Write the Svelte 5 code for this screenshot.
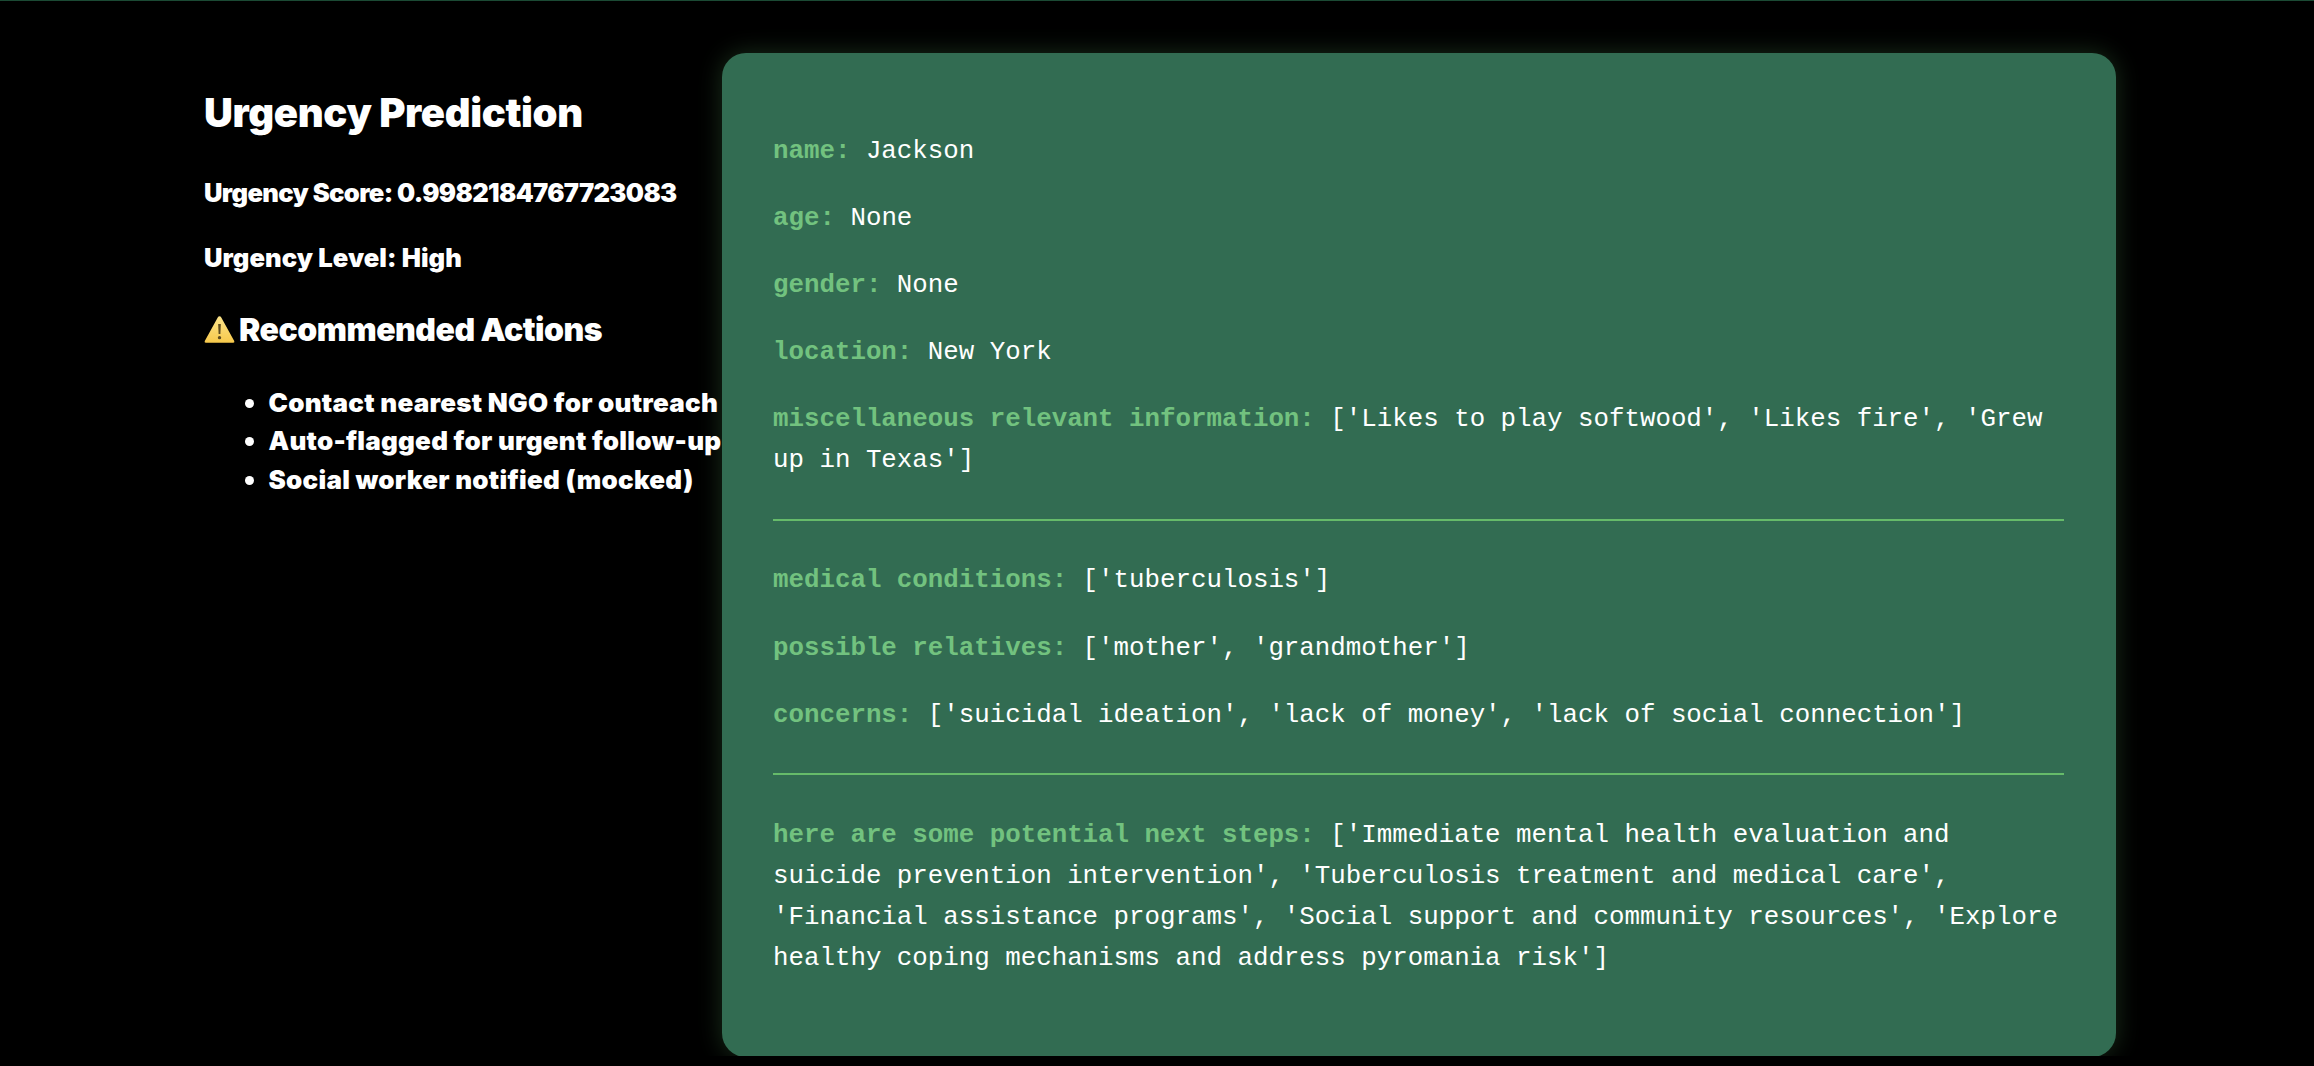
<script>
  const group1 = [
    ['name:', 'Jackson'],
    ['age:', 'None'],
    ['gender:', 'None'],
    ['location:', 'New York'],
    ['miscellaneous relevant information:', "['Likes to play softwood', 'Likes fire', 'Grew up in Texas']"]
  ];
  const group2 = [
    ['medical conditions:', "['tuberculosis']"],
    ['possible relatives:', "['mother', 'grandmother']"],
    ['concerns:', "['suicidal ideation', 'lack of money', 'lack of social connection']"]
  ];
  const group3 = [
    ['here are some potential next steps:', "['Immediate mental health evaluation and suicide prevention intervention', 'Tuberculosis treatment and medical care', 'Financial assistance programs', 'Social support and community resources', 'Explore healthy coping mechanisms and address pyromania risk']"]
  ];
  const groups = [group1, group2, group3];
  const actions = ['Contact nearest NGO for outreach', 'Auto-flagged for urgent follow-up', 'Social worker notified (mocked)'];
</script>

<div class="page">
  <section class="side">
    <h2>Urgency Prediction</h2>
    <p class="score">Urgency Score: 0.9982184767723083</p>
    <p class="level">Urgency Level: High</p>
    <h3>
      <svg class="warn" viewBox="0 0 28 26" width="31" height="29" aria-hidden="true">
        <defs>
          <linearGradient id="warnfill" x1="0" y1="0" x2="0" y2="1">
            <stop offset="0" stop-color="#fbe38a" />
            <stop offset="1" stop-color="#f7c94b" />
          </linearGradient>
        </defs>
        <path d="M14 1 Q15 1 15.6 2.2 L27.3 23.4 Q28 25 26.4 25 L1.6 25 Q0 25 .7 23.4 L12.4 2.2 Q13 1 14 1 Z" fill="url(#warnfill)" />
        <path d="M12.8 8 H15.2 L14.8 17 H13.2 Z" fill="#5c4a1e" />
        <circle cx="14" cy="20.4" r="1.5" fill="#5c4a1e" />
      </svg>
      Recommended Actions
    </h3>
    <ul>
      {#each actions as a}
        <li>{a}</li>
      {/each}
    </ul>
  </section>

  <section class="card">
    {#each groups as group, i}
      {#if i > 0}<hr />{/if}
      {#each group as [label, value]}
        <p class="row"><strong>{label}</strong> {value}</p>
      {/each}
    {/each}
  </section>
</div>

<style>
  :global(body) {
    margin: 0;
    background: #000;
  }
  .page {
    display: grid;
    grid-template-columns: 518px 1394px;
    padding: 52px 0 9px 204px;
    border-top: 1px solid #1b4a34;
    height: 1056px;
    box-sizing: border-box;
    overflow: hidden;
  }
  .side {
    color: #fff;
    font-family: Inter, "Liberation Sans", sans-serif;
    font-weight: 900;
    white-space: nowrap;
    min-width: 0;
    padding-top: 36px;
  }
  h2 {
    margin: 0;
    font-size: 40px;
    line-height: 48px;
    font-weight: 900;
    letter-spacing: -0.35px;
  }
  .score,
  .level {
    margin: 0;
    font-size: 25.6px;
    line-height: 38px;
  }
  .score { margin-top: 37px; letter-spacing: -0.65px; }
  .level { margin-top: 27px; letter-spacing: 0.05px; }
  h3 {
    margin: 31px 0 0;
    font-size: 32px;
    line-height: 44px;
    font-weight: 900;
    letter-spacing: -0.5px;
    display: flex;
    align-items: center;
    gap: 4px;
  }
  .warn { flex: none; margin-top: -1px; }
  ul {
    margin: 32px 0 0;
    padding: 0 0 0 64.5px;
    font-size: 26px;
    line-height: 38.4px;
    list-style: none;
    letter-spacing: 0.25px;
  }
  li { position: relative; }
  li::before {
    content: '';
    position: absolute;
    left: -24px;
    top: 15px;
    width: 9px;
    height: 9px;
    border-radius: 50%;
    background: #fff;
  }
  .card {
    box-sizing: border-box;
    width: 1394px;
    height: 1004px;
    padding: 78px 52px 0 51px;
    background: #326c52;
    border-radius: 24px;
    box-shadow: 0 0 24px rgba(102, 187, 106, 0.25);
    color: #fff;
    font-family: "Liberation Mono", monospace;
    font-size: 25.8px;
    line-height: 41px;
  }
  .row {
    margin: 0 0 26.1px;
  }
  strong {
    color: #72c27f;
    font-weight: 700;
  }
  hr {
    border: 0;
    height: 2px;
    background: #66bb6a;
    margin: 37.5px 0 39.6px;
  }
</style>
